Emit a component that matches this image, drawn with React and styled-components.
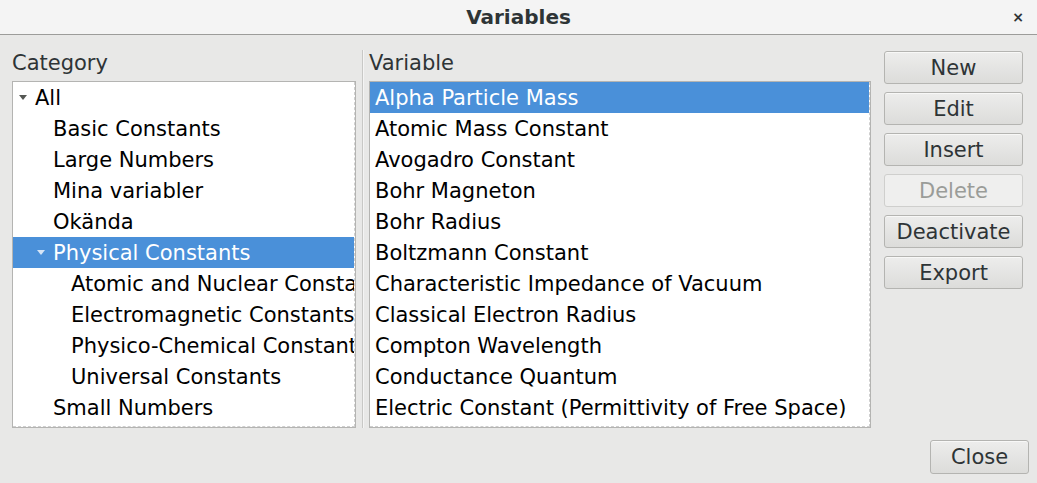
import styled, { createGlobalStyle } from 'styled-components'

const GlobalStyle = createGlobalStyle`
  body {
    margin: 0;
    background: #e8e8e7;
    font-family: "DejaVu Sans", "Noto Sans", sans-serif;
  }
`

const Window = styled.div`
  width: 1037px;
  height: 483px;
  display: flex;
  flex-direction: column;
  background: #e8e8e7;
  overflow: hidden;
`

const TitleBar = styled.div`
  height: 34px;
  display: grid;
  grid-template-columns: 1fr auto 1fr;
  align-items: center;
  background: #f4f4f4;
  border-bottom: 1px solid #9c9c9a;
`

const Title = styled.div`
  grid-column: 2;
  font-weight: bold;
  font-size: 20px;
  color: #2e3436;
`

const CloseX = styled.div`
  justify-self: end;
  padding-right: 13px;
  font-size: 14px;
  font-weight: bold;
  color: #2e3436;
`

const Body = styled.div`
  display: flex;
  padding: 0 0 0 12px;
`

const Pane = styled.div`
  width: ${p => p.$w}px;
  padding-top: 16px;
  display: flex;
  flex-direction: column;
`

const Label = styled.div`
  font-size: 21px;
  line-height: 25px;
  color: #2e3436;
  margin-bottom: 5px;
`

const ListBox = styled.div`
  height: 347px;
  box-sizing: border-box;
  border: 1px solid #b4b4b2;
  background: #fff;
  display: flex;
`

const ListInner = styled.div`
  flex: 1;
  border-right: 1px dashed #cfcfcf;
  border-bottom: 1px dashed #cfcfcf;
  overflow: hidden;
`

const Row = styled.div`
  height: 31px;
  display: flex;
  align-items: center;
  padding-left: ${p => p.$pad}px;
  font-size: 21px;
  white-space: nowrap;
  color: ${p => (p.$sel ? '#fff' : '#000')};
  background: ${p => (p.$sel ? '#4a90d9' : 'transparent')};
`

const Arrow = styled.span`
  width: 0;
  height: 0;
  border-left: 4px solid transparent;
  border-right: 4px solid transparent;
  border-top: 5px solid ${p => (p.$sel ? '#d6e5f6' : '#555753')};
  margin-right: 8px;
`

const Splitter = styled.div`
  width: 13px;
  margin-top: 15px;
  height: 378px;
  display: flex;
  justify-content: center;
  &::before {
    content: '';
    width: 1px;
    background: #c8c8c6;
    border-right: 1px solid #f4f4f4;
  }
`

const ButtonCol = styled.div`
  margin-left: 13px;
  padding-top: 16px;
  display: flex;
  flex-direction: column;
  gap: 8px;
`

const Button = styled.button`
  width: ${p => p.$w || 139}px;
  height: ${p => p.$h || 33}px;
  box-sizing: border-box;
  border: 1px solid ${p => (p.disabled ? '#cfcfcd' : '#b4b4b1')};
  border-radius: 3px;
  background: ${p =>
    p.disabled ? '#efefee' : 'linear-gradient(#ededec, #dcdcda)'};
  color: ${p => (p.disabled ? '#9a9c98' : '#2e3436')};
  font-family: "DejaVu Sans", sans-serif;
  font-size: 21px;
  padding: 0;
  box-shadow: ${p => (p.disabled ? 'none' : 'inset 0 1px #f8f8f7')};
`

const Footer = styled.div`
  display: flex;
  justify-content: flex-end;
  padding: 12px 8px 0 0;
`

const categories = [
  { name: 'All', level: 0, open: true },
  { name: 'Basic Constants', level: 1 },
  { name: 'Large Numbers', level: 1 },
  { name: 'Mina variabler', level: 1 },
  { name: 'Okända', level: 1 },
  { name: 'Physical Constants', level: 1, open: true, sel: true },
  { name: 'Atomic and Nuclear Constants', level: 2 },
  { name: 'Electromagnetic Constants', level: 2 },
  { name: 'Physico-Chemical Constants', level: 2 },
  { name: 'Universal Constants', level: 2 },
  { name: 'Small Numbers', level: 1 },
]

const variables = [
  'Alpha Particle Mass',
  'Atomic Mass Constant',
  'Avogadro Constant',
  'Bohr Magneton',
  'Bohr Radius',
  'Boltzmann Constant',
  'Characteristic Impedance of Vacuum',
  'Classical Electron Radius',
  'Compton Wavelength',
  'Conductance Quantum',
  'Electric Constant (Permittivity of Free Space)',
]

export default function App() {
  return (
    <Window>
      <GlobalStyle />
      <TitleBar>
        <Title>Variables</Title>
        <CloseX>×</CloseX>
      </TitleBar>
      <Body>
        <Pane $w={344}>
          <Label>Category</Label>
          <ListBox>
            <ListInner>
              {categories.map(c => (
                <Row
                  key={c.name}
                  $sel={c.sel}
                  $pad={c.open ? 6 + c.level * 18 : 22 + c.level * 18}
                >
                  {c.open && <Arrow $sel={c.sel} />}
                  {c.name}
                </Row>
              ))}
            </ListInner>
          </ListBox>
        </Pane>
        <Splitter />
        <Pane $w={502}>
          <Label>Variable</Label>
          <ListBox>
            <ListInner>
              {variables.map((v, i) => (
                <Row key={v} $sel={i === 0} $pad={5}>
                  {v}
                </Row>
              ))}
            </ListInner>
          </ListBox>
        </Pane>
        <ButtonCol>
          <Button>New</Button>
          <Button>Edit</Button>
          <Button>Insert</Button>
          <Button disabled>Delete</Button>
          <Button>Deactivate</Button>
          <Button>Export</Button>
        </ButtonCol>
      </Body>
      <Footer>
        <Button $w={99} $h={34}>Close</Button>
      </Footer>
    </Window>
  )
}
